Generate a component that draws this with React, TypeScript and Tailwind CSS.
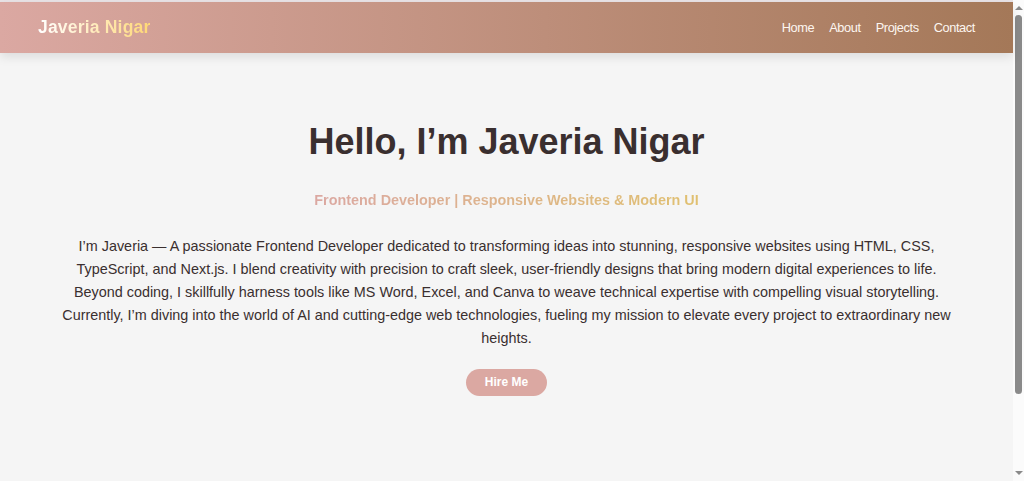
export default function App() {
  const font = { fontFamily: '"Liberation Sans", Arial, sans-serif' };
  return (
    <div style={font} className="flex h-[481px] w-full overflow-hidden bg-[#f5f5f5] font-['Liberation_Sans',Arial,sans-serif]">
      <div className="flex min-w-0 flex-1 flex-col">
        <div className="h-[2px] shrink-0 bg-[#e9e3e6]" />
        <header className="z-10 flex h-[51px] shrink-0 items-center justify-between bg-gradient-to-r from-[#dba8a2] to-[#a47858] pl-[38px] pr-[38px] shadow-[0_4px_10px_rgba(0,0,0,0.1)]">
          <div className="bg-gradient-to-r from-[#ffffff] to-[#ffd873] bg-clip-text text-[17.6px] font-bold tracking-[0.15px] text-transparent">
            Javeria Nigar
          </div>
          <nav className="flex gap-[15px] text-[12.8px] tracking-[-0.4px] text-[#fdf6f0]">
            <a>Home</a>
            <a>About</a>
            <a>Projects</a>
            <a>Contact</a>
          </nav>
        </header>
        <main className="flex flex-1 flex-col items-center px-[56px] pt-[63px] text-center text-[#3a2f2f]">
          <h1 className="text-[36px] leading-[51px] font-bold">Hello, I’m Javeria Nigar</h1>
          <p className="mt-[25px] bg-gradient-to-r from-[#dba8a2] to-[#e0c070] bg-clip-text text-[14.4px] leading-[17px] font-bold text-transparent">
            Frontend Developer | Responsive Websites &amp; Modern UI
          </p>
          <p className="mt-[26px] text-[14.4px] leading-[23px]">
            I’m Javeria — A passionate Frontend Developer dedicated to transforming ideas into stunning, responsive websites using HTML, CSS, TypeScript, and Next.js. I blend creativity with precision to craft sleek, user-friendly designs that bring modern digital experiences to life. Beyond coding, I skillfully harness tools like MS Word, Excel, and Canva to weave technical expertise with compelling visual storytelling. Currently, I’m diving into the world of AI and cutting-edge web technologies, fueling my mission to elevate every project to extraordinary new heights.
          </p>
          <button className="mt-[18.5px] flex h-[27.5px] w-[81px] items-center justify-center rounded-full bg-[#dba8a2] text-[12px] font-bold text-white">
            Hire Me
          </button>
        </main>
      </div>
      <div className="relative flex w-[11px] shrink-0 flex-col items-center bg-[#fbfbfb]">
        <div className="mt-[6px] h-0 w-0 border-x-[4px] border-b-[4px] border-x-transparent border-b-[#8a8a8a]" />
        <div className="mt-[5px] h-[379px] w-[7px] rounded-full bg-[#8a8a8a]" />
        <div className="mt-auto mb-[6px] h-0 w-0 border-x-[4px] border-t-[4px] border-x-transparent border-t-[#8a8a8a]" />
      </div>
    </div>
  );
}
